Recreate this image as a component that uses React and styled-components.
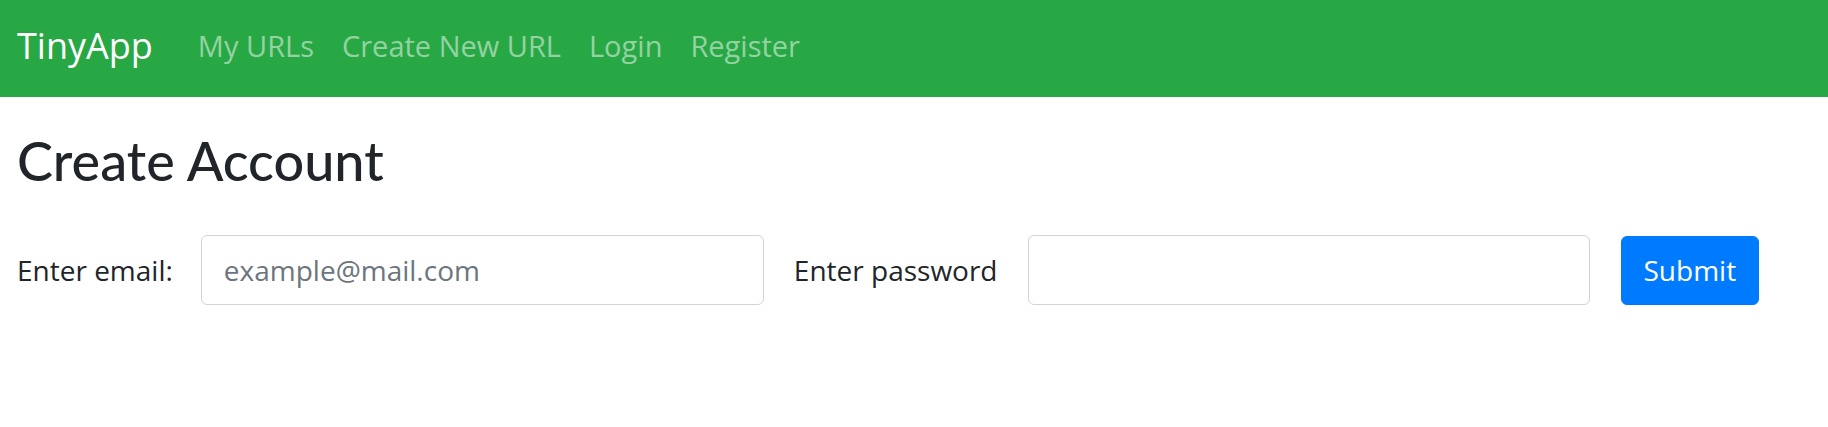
import React from "react";
import styled, { createGlobalStyle } from "styled-components";

const GlobalStyle = createGlobalStyle`
  html, body {
    margin: 0;
    padding: 0;
    background: #ffffff;
  }
  body {
    font-family: "Open Sans", "Noto Sans", "DejaVu Sans", sans-serif;
    color: #212529;
  }
  * { box-sizing: border-box; }
`;

const NavBar = styled.nav`
  display: flex;
  align-items: center;
  height: 97px;
  padding: 0 17px 5px;
  background: #28a745;
`;

const Brand = styled.a`
  font-size: 36px;
  line-height: 1.5;
  color: #ffffff;
  text-decoration: none;
  margin-right: 31px;
`;

const NavLink = styled.a`
  font-size: 29px;
  line-height: 1.5;
  padding: 0 14px;
  color: rgba(255, 255, 255, 0.5);
  text-decoration: none;
`;

const Main = styled.main`
  padding: 31px 17px 0;
`;

const Title = styled.h1`
  margin: 0;
  font-family: Lato, "Open Sans", sans-serif;
  font-size: 54px;
  font-weight: 500;
  line-height: 66px;
  color: #212529;
`;

const FormRow = styled.form`
  display: flex;
  align-items: center;
  margin-top: 41px;
`;

const Label = styled.label`
  font-size: 28px;
  line-height: 1.5;
  color: #212529;
  margin-right: ${(p) => p.$gap}px;
`;

const Input = styled.input`
  width: ${(p) => p.$width}px;
  height: 70px;
  padding: 0 22px;
  margin-right: ${(p) => p.$gap}px;
  border: 1px solid #ced4da;
  border-radius: 6px;
  font-family: inherit;
  font-size: 28px;
  color: #495057;
  background: #ffffff;
  outline: none;
  &::placeholder {
    color: #6c757d;
    opacity: 1;
  }
`;

const SubmitButton = styled.button`
  height: 69px;
  padding: 0 22px;
  border: 1px solid #007bff;
  border-radius: 6px;
  background: #007bff;
  color: #ffffff;
  font-family: inherit;
  font-size: 28px;
  cursor: pointer;
`;

export default function App() {
  return (
    <>
      <GlobalStyle />
      <NavBar>
        <Brand href="#">TinyApp</Brand>
        <NavLink href="#">My URLs</NavLink>
        <NavLink href="#">Create New URL</NavLink>
        <NavLink href="#">Login</NavLink>
        <NavLink href="#">Register</NavLink>
      </NavBar>
      <Main>
        <Title>Create Account</Title>
        <FormRow onSubmit={(e) => e.preventDefault()}>
          <Label htmlFor="email" $gap={28}>Enter email:</Label>
          <Input id="email" type="email" placeholder="example@mail.com" $width={563} $gap={30} />
          <Label htmlFor="password" $gap={30}>Enter password</Label>
          <Input id="password" type="password" $width={562} $gap={31} />
          <SubmitButton type="submit">Submit</SubmitButton>
        </FormRow>
      </Main>
    </>
  );
}
